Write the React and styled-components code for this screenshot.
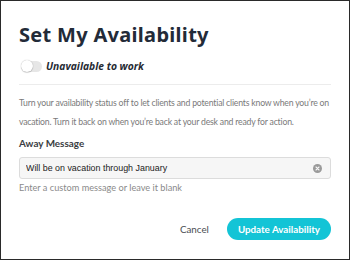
import React, { useState } from "react";
import styled, { createGlobalStyle } from "styled-components";

const GlobalStyle = createGlobalStyle`
  html, body {
    margin: 0;
    padding: 0;
    background: #fff;
  }
  * {
    box-sizing: border-box;
  }
`;

const Modal = styled.div`
  width: 350px;
  height: 260px;
  border: 1px solid #2a2a2a;
  background: #fff;
  padding: 21px 18px 0 18px;
  font-family: Lato, "Open Sans", sans-serif;
  display: flex;
  flex-direction: column;
`;

const Title = styled.h1`
  margin: 0;
  font-family: "Noto Sans", "Open Sans", sans-serif;
  font-size: 20px;
  line-height: 26px;
  font-weight: 700;
  color: #232b38;
  letter-spacing: 0.3px;
`;

const ToggleRow = styled.label`
  display: flex;
  align-items: center;
  gap: 4px;
  margin-top: 11px;
  padding-left: 3px;
  cursor: pointer;
`;

const Track = styled.span`
  position: relative;
  width: 20px;
  height: 11px;
  border-radius: 6px;
  background: ${(p) => (p.$on ? "#14c5d7" : "#e6e6e6")};
`;

const Knob = styled.span`
  position: absolute;
  top: -0.5px;
  left: ${(p) => (p.$on ? "8px" : "-1px")};
  width: 12px;
  height: 12px;
  border-radius: 50%;
  background: #fff;
  box-shadow: 0 0 1px rgba(0, 0, 0, 0.35), 0 1px 1px rgba(0, 0, 0, 0.15);
`;

const ToggleText = styled.span`
  font-family: "Open Sans", sans-serif;
  font-size: 10.3px;
  font-weight: 700;
  font-style: italic;
  color: #262b33;
`;

const Divider = styled.hr`
  border: 0;
  border-top: 1px solid #ececec;
  margin: 11px 0 0 0;
`;

const Help = styled.p`
  margin: 8px 0 0 0;
  font-size: 8.7px;
  letter-spacing: -0.2px;
  line-height: 19px;
  color: #7a7a7a;
`;

const Label = styled.div`
  margin-top: 5px;
  font-size: 9.9px;
  line-height: 15px;
  font-weight: 700;
  color: #3a3d42;
`;

const InputWrap = styled.div`
  position: relative;
  margin-top: 6px;
  height: 22px;
  border: 1px solid #dcdcdc;
  border-radius: 3px;
  background: #f6f6f6;
  display: flex;
  align-items: center;
  padding: 0 8px 0 6px;
`;

const Input = styled.input`
  flex: 1;
  border: 0;
  background: transparent;
  outline: none;
  font-family: "Liberation Sans", Arial, sans-serif;
  font-size: 8.9px;
  color: #222;
  padding: 0;
`;

const Clear = styled.button`
  width: 9px;
  height: 9px;
  border-radius: 50%;
  border: 0;
  padding: 0;
  background: #9a9a9a;
  display: flex;
  align-items: center;
  justify-content: center;
  cursor: pointer;
`;

const Hint = styled.div`
  margin-top: 3px;
  font-size: 9.2px;
  line-height: 12px;
  color: #8a8a8a;
`;

const Actions = styled.div`
  margin-top: auto;
  margin-bottom: 19px;
  display: flex;
  justify-content: flex-end;
  align-items: center;
  gap: 18px;
`;

const TextButton = styled.button`
  border: 0;
  background: none;
  font-family: inherit;
  font-size: 9.8px;
  color: #4a4d52;
  padding: 0;
  cursor: pointer;
`;

const PrimaryButton = styled.button`
  height: 22px;
  padding: 0 11px;
  border: 0;
  border-radius: 11px;
  background: #13c4d6;
  color: #fff;
  font-family: inherit;
  font-size: 9.8px;
  font-weight: 700;
  cursor: pointer;
`;

export default function App() {
  const [available, setAvailable] = useState(false);
  const [message, setMessage] = useState("Will be on vacation through January");

  return (
    <>
      <GlobalStyle />
      <Modal>
        <Title>Set My Availability</Title>
        <ToggleRow onClick={() => setAvailable(!available)}>
          <Track $on={available}>
            <Knob $on={available} />
          </Track>
          <ToggleText>Unavailable to work</ToggleText>
        </ToggleRow>
        <Divider />
        <Help>
          Turn your availability status off to let clients and potential clients know when you’re on
          vacation. Turn it back on when you’re back at your desk and ready for action.
        </Help>
        <Label>Away Message</Label>
        <InputWrap>
          <Input value={message} onChange={(e) => setMessage(e.target.value)} />
          <Clear type="button" onClick={() => setMessage("")}>
            <svg width="5" height="5" viewBox="0 0 5 5">
              <path d="M1 1L4 4M4 1L1 4" stroke="#f6f6f6" strokeWidth="1.1" strokeLinecap="round" />
            </svg>
          </Clear>
        </InputWrap>
        <Hint>Enter a custom message or leave it blank</Hint>
        <Actions>
          <TextButton type="button">Cancel</TextButton>
          <PrimaryButton type="button">Update Availability</PrimaryButton>
        </Actions>
      </Modal>
    </>
  );
}
